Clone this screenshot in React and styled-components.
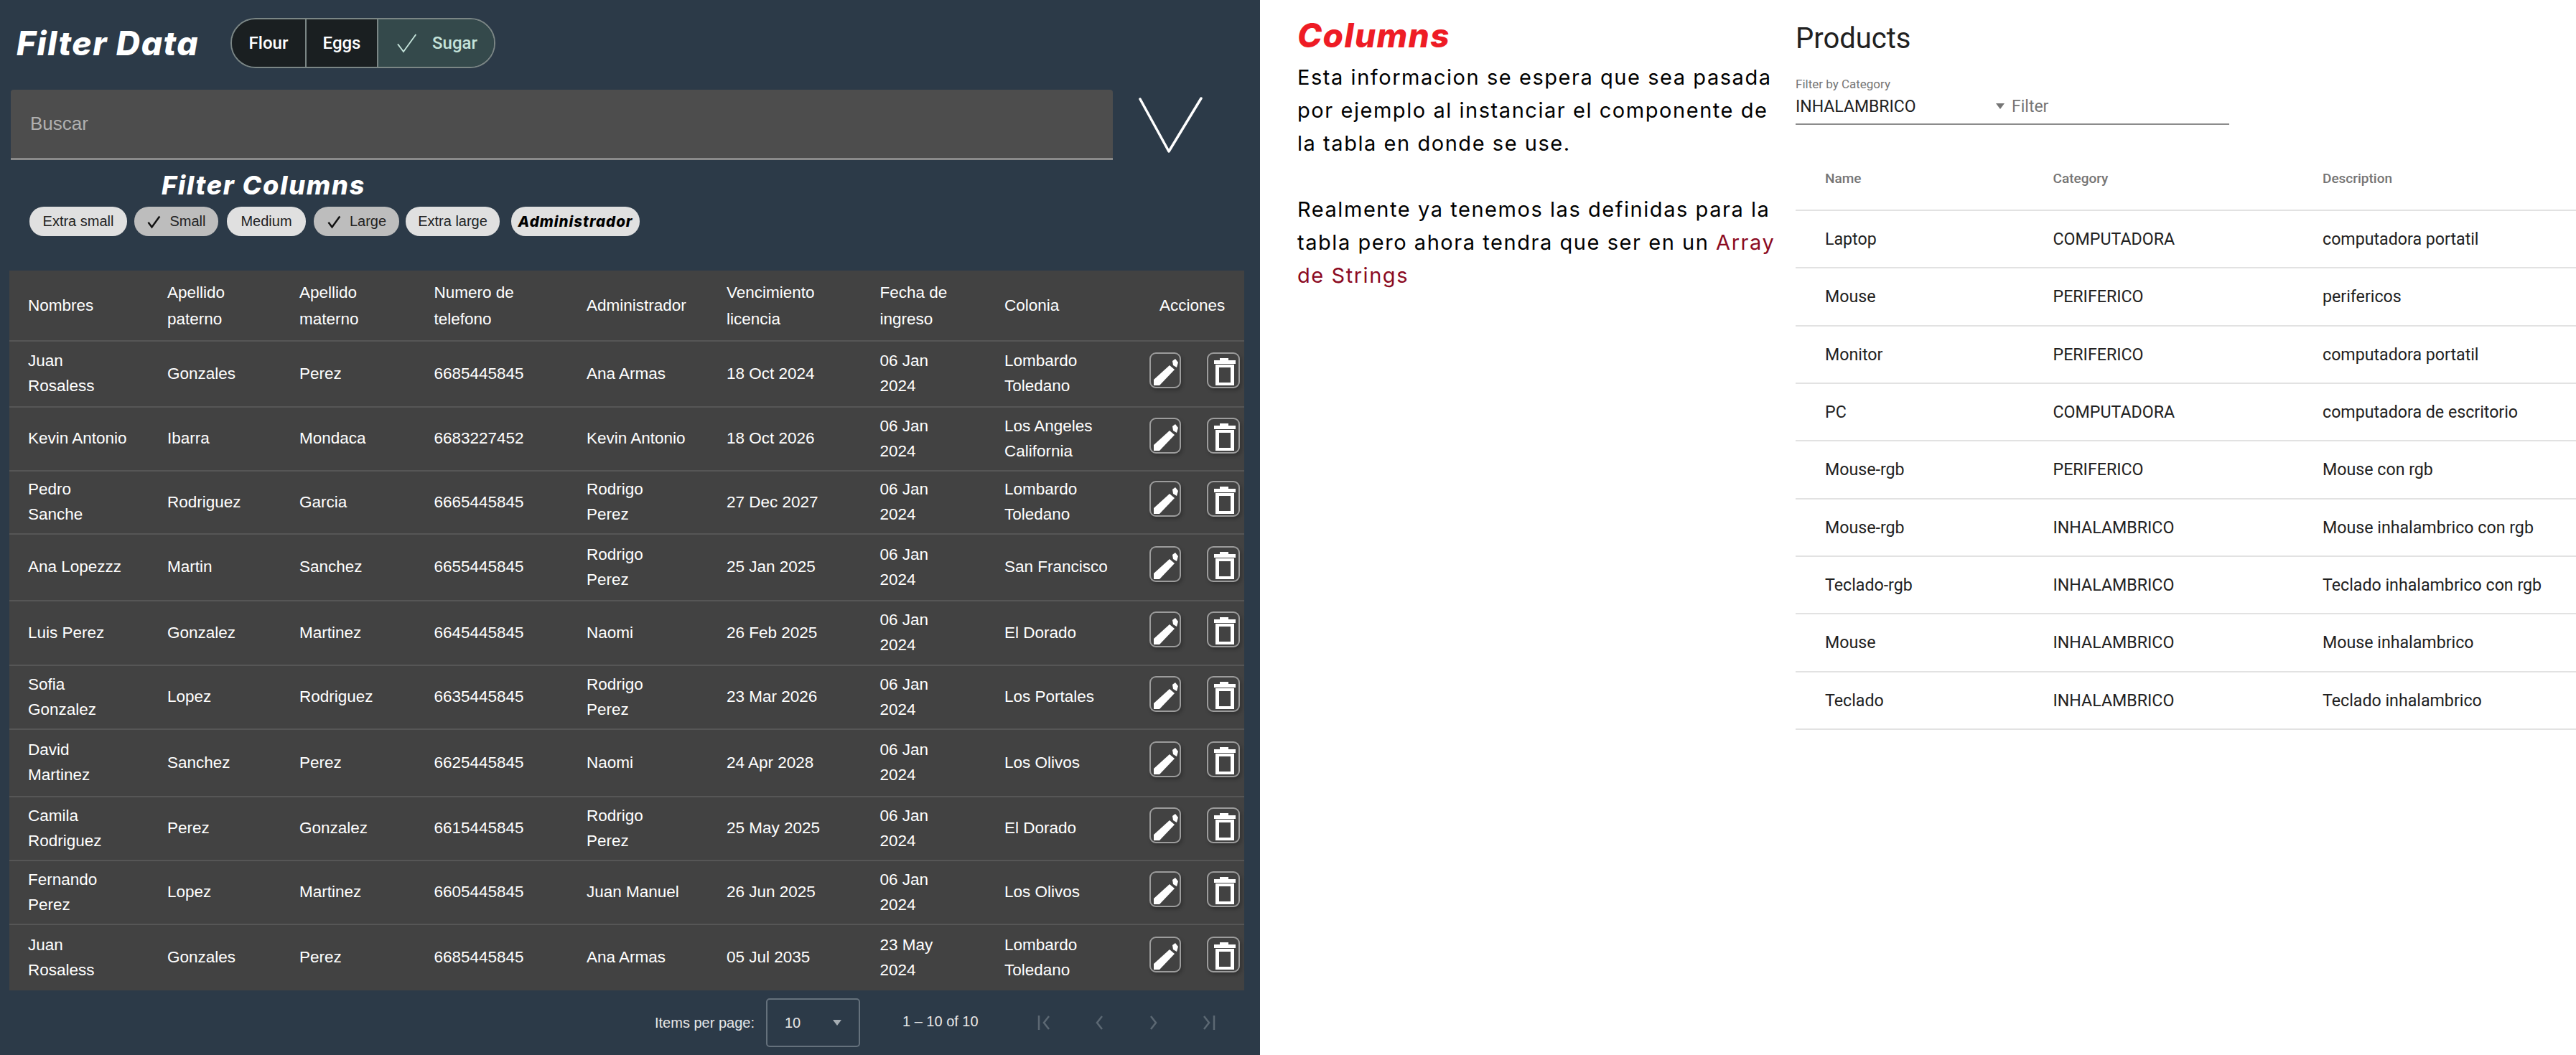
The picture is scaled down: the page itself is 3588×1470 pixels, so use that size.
import React from 'react'
import styled, { createGlobalStyle } from 'styled-components'

const GlobalStyle = createGlobalStyle`
  html, body {
    margin: 0;
    padding: 0;
    background: #fff;
  }
  * {
    box-sizing: border-box;
  }
`

const Page = styled.div`
  display: flex;
  width: 3588px;
  height: 1470px;
  overflow: hidden;
`

const LeftPanel = styled.section`
  width: 1755px;
  height: 100%;
  background: #2c3a48;
  padding-top: 25px;
  font-family: "Liberation Sans", Arial, sans-serif;
  color: #fff;
`

const TitleRow = styled.div`
  display: flex;
  align-items: center;
  height: 70px;
  padding-left: 23px;
  gap: 44px;
`

const Title = styled.h1`
  width: 254px;
  margin: 0;
  font-family: Inter, sans-serif;
  font-size: 46px;
  font-weight: 800;
  font-style: italic;
  letter-spacing: 1.6px;
  line-height: 1;
  white-space: nowrap;
  color: #fff;
`

const Toggle = styled.div`
  display: flex;
  height: 70px;
  border: 2px solid #7b8685;
  border-radius: 35px;
  overflow: hidden;
`

const ToggleItem = styled.div`
  display: flex;
  align-items: center;
  justify-content: center;
  gap: 20px;
  width: ${props => props.w}px;
  background: ${props => props.on ? '#34494b' : '#1a1f21'};
  color: ${props => props.on ? '#c4e3da' : '#fff'};
  font-family: Roboto, sans-serif;
  font-size: 24px;
  font-weight: 500;
  & + & {
    border-left: 2px solid #7b8685;
  }
`

const SearchRow = styled.div`
  display: flex;
  align-items: center;
  margin-top: 30px;
  padding-left: 15px;
  gap: 36px;
`

const SearchBox = styled.div`
  display: flex;
  align-items: center;
  width: 1535px;
  height: 98px;
  padding: 0 0 0 27px;
  background: #4d4d4d;
  border-bottom: 3px solid #8a8a8a;
  border-radius: 4px 4px 0 0;
  font-size: 26px;
  color: #b0b0b0;
`

const ColumnsTitle = styled.h2`
  margin: 13px 0 0 225px;
  font-family: Inter, sans-serif;
  font-size: 36px;
  font-weight: 800;
  font-style: italic;
  letter-spacing: 1.8px;
  line-height: 44px;
  color: #fff;
`

const ChipRow = styled.div`
  display: flex;
  height: 41px;
  margin: 8px 0 48px 41px;
`

const Chip = styled.div`
  display: flex;
  align-items: center;
  justify-content: center;
  gap: 12px;
  width: ${props => props.w}px;
  margin-right: ${props => props.gap}px;
  border-radius: 20px;
  background: ${props => props.on ? '#bdbdbd' : '#e0e0e0'};
  color: #222;
  font-size: 20px;
  white-space: nowrap;
`

const BoldChip = styled(Chip)`
  font-family: Inter, sans-serif;
  font-size: 20.5px;
  font-weight: 800;
  font-style: italic;
  letter-spacing: 1px;
  color: #000;
`

const DataTable = styled.table`
  width: 1720px;
  margin-left: 13px;
  border-collapse: collapse;
  table-layout: fixed;
  background: #424242;
  font-size: 22.5px;
  color: #fff;
`

const HeadCell = styled.th`
  padding: 0 0 0 ${props => props.pad || 26}px;
  font-weight: 400;
  line-height: 37px;
  text-align: left;
  white-space: pre-line;
`

const BodyRow = styled.tr`
  height: ${props => props.h}px;
  border-top: 2px solid #565656;
`

const HeadRow = styled.tr`
  height: 98px;
`

const BodyCell = styled.td`
  padding: 0 0 2px 26px;
  line-height: 35px;
  white-space: pre-line;
`

const ActionCell = styled.td`
  padding: 0;
`

const Actions = styled.div`
  display: flex;
  align-items: center;
  gap: 36px;
  margin: -10px 0 0 1px;
`

const ActionButton = styled.div`
  display: flex;
  align-items: center;
  justify-content: center;
  width: ${props => props.w}px;
  height: 50px;
  border: 2px solid #9c9c9c;
  border-radius: 9px;
  box-shadow: 2px 3px 5px rgba(0, 0, 0, 0.25);
`

const Pager = styled.div`
  display: flex;
  align-items: center;
  height: 90px;
  padding: 0 0 0 912px;
  color: #e8e8e8;
  font-size: 20px;
`

const PagerSelect = styled.div`
  display: flex;
  align-items: center;
  justify-content: space-between;
  width: 131px;
  height: 68px;
  margin: 0 59px 0 16px;
  padding: 0 24px;
  border: 2px solid #65717c;
  border-radius: 5px;
`

const SelectArrow = styled.span`
  width: 0;
  height: 0;
  border-left: 6px solid transparent;
  border-right: 6px solid transparent;
  border-top: 8px solid ${props => props.color};
`

const PagerRange = styled.div`
  width: 187px;
  margin-top: -4px;
`

const PagerNav = styled.div`
  display: flex;
  align-items: center;
  gap: 54px;
`

const Notes = styled.section`
  width: 746px;
  padding: 22px 0 0 52px;
  font-family: Inter, sans-serif;
  color: #000;
`

const NotesTitle = styled.h2`
  margin: 0 0 9px;
  font-size: 46px;
  font-weight: 800;
  font-style: italic;
  letter-spacing: 1.4px;
  line-height: 54px;
  color: #ee1c25;
`

const NotesText = styled.p`
  margin: 0;
  font-size: 29px;
  font-weight: 400;
  letter-spacing: 1.55px;
  line-height: 46px;
  white-space: pre-line;
`

const Accent = styled.span`
  color: #8b0a22;
`

const Products = styled.section`
  flex: 1;
  padding-top: 30px;
  font-family: Roboto, sans-serif;
  color: #212121;
`

const ProductsTitle = styled.h2`
  margin: 0;
  font-size: 40px;
  font-weight: 400;
  line-height: 48px;
`

const FilterField = styled.div`
  width: 604px;
  margin-top: 29px;
`

const FilterLabel = styled.div`
  height: 20px;
  font-size: 17px;
  line-height: 20px;
  color: #757575;
`

const FilterControl = styled.div`
  display: flex;
  align-items: center;
  height: 47px;
  padding-bottom: 3px;
  border-bottom: 2px solid #8c8c8c;
  font-size: 23px;
`

const FilterValue = styled.span`
  width: 279px;
`

const FilterHint = styled.span`
  margin-left: 10px;
  color: #757575;
`

const ProductTable = styled.div`
  margin-top: 30px;
`

const ProductRow = styled.div`
  display: grid;
  grid-template-columns: 358.5px 375.5px 1fr;
  align-items: center;
  height: ${props => props.h}px;
  border-bottom: 2px solid #e2e2e2;
  font-size: ${props => props.head ? 19 : 23.2}px;
  font-weight: ${props => props.head ? 500 : 400};
  color: ${props => props.head ? '#757575' : '#212121'};
`

const ProductCell = styled.div`
  padding-left: ${props => props.first ? 41 : 0}px;
`

const Check = ({ size, color, width }) => (
  <svg width={size} height={size} viewBox="0 0 24 24" fill="none" stroke={color} strokeWidth={width}>
    <path d="M3 13l6 8L22 3" />
  </svg>
)

const Chevron = () => (
  <svg width="89" height="78" viewBox="0 0 89 78" fill="none" stroke="#fff" strokeWidth="3.5" strokeLinecap="round" strokeLinejoin="round">
    <path d="M2 3l40 73L87 2" />
  </svg>
)

const PenIcon = () => (
  <svg width="40" height="46" viewBox="0 0 40 46" fill="#fff">
    <path d="M4 36L26 16l7 6-21 22H4z" />
    <path d="M30 10l4-3 4 5-2 7-5-3z" />
  </svg>
)

const TrashIcon = () => (
  <svg width="42" height="46" viewBox="0 0 42 46" fill="#fff">
    <path d="M16 6h12v3h10v5H8V9h8z" />
    <path fillRule="evenodd" d="M10 15h26v29H10zM15 19v21h16V19z" />
  </svg>
)

const NavIcon = ({ d }) => (
  <svg width="22" height="22" viewBox="0 0 22 22" fill="none" stroke="#5c6873" strokeWidth="2.5">
    <path d={d} />
  </svg>
)

const columns = [
  { label: 'Nombres', width: 194 },
  { label: 'Apellido\npaterno', width: 184 },
  { label: 'Apellido\nmaterno', width: 187.5 },
  { label: 'Numero de\ntelefono', width: 212.5 },
  { label: 'Administrador', width: 195 },
  { label: 'Vencimiento\nlicencia', width: 213.5 },
  { label: 'Fecha de\ningreso', width: 173.5 },
  { label: 'Colonia', width: 227 },
]

const rows = [
  [92, 'Juan\nRosaless', 'Gonzales', 'Perez', '6685445845', 'Ana Armas', '18 Oct 2024', '06 Jan\n2024', 'Lombardo\nToledano'],
  [89, 'Kevin Antonio', 'Ibarra', 'Mondaca', '6683227452', 'Kevin Antonio', '18 Oct 2026', '06 Jan\n2024', 'Los Angeles\nCalifornia'],
  [88, 'Pedro\nSanche', 'Rodriguez', 'Garcia', '6665445845', 'Rodrigo\nPerez', '27 Dec 2027', '06 Jan\n2024', 'Lombardo\nToledano'],
  [93, 'Ana Lopezzz', 'Martin', 'Sanchez', '6655445845', 'Rodrigo\nPerez', '25 Jan 2025', '06 Jan\n2024', 'San Francisco'],
  [90, 'Luis Perez', 'Gonzalez', 'Martinez', '6645445845', 'Naomi', '26 Feb 2025', '06 Jan\n2024', 'El Dorado'],
  [89, 'Sofia\nGonzalez', 'Lopez', 'Rodriguez', '6635445845', 'Rodrigo\nPerez', '23 Mar 2026', '06 Jan\n2024', 'Los Portales'],
  [94, 'David\nMartinez', 'Sanchez', 'Perez', '6625445845', 'Naomi', '24 Apr 2028', '06 Jan\n2024', 'Los Olivos'],
  [89, 'Camila\nRodriguez', 'Perez', 'Gonzalez', '6615445845', 'Rodrigo\nPerez', '25 May 2025', '06 Jan\n2024', 'El Dorado'],
  [89, 'Fernando\nPerez', 'Lopez', 'Martinez', '6605445845', 'Juan Manuel', '26 Jun 2025', '06 Jan\n2024', 'Los Olivos'],
  [92, 'Juan\nRosaless', 'Gonzales', 'Perez', '6685445845', 'Ana Armas', '05 Jul 2035', '23 May\n2024', 'Lombardo\nToledano'],
]

const products = [
  ['Laptop', 'COMPUTADORA', 'computadora portatil'],
  ['Mouse', 'PERIFERICO', 'perifericos'],
  ['Monitor', 'PERIFERICO', 'computadora portatil'],
  ['PC', 'COMPUTADORA', 'computadora de escritorio'],
  ['Mouse-rgb', 'PERIFERICO', 'Mouse con rgb'],
  ['Mouse-rgb', 'INHALAMBRICO', 'Mouse inhalambrico con rgb'],
  ['Teclado-rgb', 'INHALAMBRICO', 'Teclado inhalambrico con rgb'],
  ['Mouse', 'INHALAMBRICO', 'Mouse inhalambrico'],
  ['Teclado', 'INHALAMBRICO', 'Teclado inhalambrico'],
]

export default function App() {
  return (
    <Page>
      <GlobalStyle />
      <LeftPanel>
        <TitleRow>
          <Title>Filter Data</Title>
          <Toggle>
            <ToggleItem w={102}>Flour</ToggleItem>
            <ToggleItem w={100}>Eggs</ToggleItem>
            <ToggleItem w={163} on>
              <Check size={32} color="#c4e3da" width={1.4} />
              Sugar
            </ToggleItem>
          </Toggle>
        </TitleRow>

        <SearchRow>
          <SearchBox>Buscar</SearchBox>
          <Chevron />
        </SearchRow>

        <ColumnsTitle>Filter Columns</ColumnsTitle>
        <ChipRow>
          <Chip w={136} gap={10}>Extra small</Chip>
          <Chip w={117} gap={12} on><Check size={20} color="#111" width={3} />Small</Chip>
          <Chip w={110} gap={11}>Medium</Chip>
          <Chip w={119} gap={9} on><Check size={20} color="#111" width={3} />Large</Chip>
          <Chip w={131} gap={16}>Extra large</Chip>
          <BoldChip w={179}>Administrador</BoldChip>
        </ChipRow>

        <DataTable>
          <colgroup>
            {columns.map(c => <col key={c.label} width={c.width} />)}
            <col />
          </colgroup>
          <thead>
            <HeadRow>
              {columns.map(c => <HeadCell key={c.label}>{c.label}</HeadCell>)}
              <HeadCell pad={15}>Acciones</HeadCell>
            </HeadRow>
          </thead>
          <tbody>
            {rows.map(([h, ...cells], i) => (
              <BodyRow key={i} h={h}>
                {cells.map((text, j) => <BodyCell key={j}>{text}</BodyCell>)}
                <ActionCell>
                  <Actions>
                    <ActionButton w={44}><PenIcon /></ActionButton>
                    <ActionButton w={46}><TrashIcon /></ActionButton>
                  </Actions>
                </ActionCell>
              </BodyRow>
            ))}
          </tbody>
        </DataTable>

        <Pager>
          Items per page:
          <PagerSelect>
            10
            <SelectArrow color="#a6adb3" />
          </PagerSelect>
          <PagerRange>1 – 10 of 10</PagerRange>
          <PagerNav>
            <NavIcon d="M3 1v20M17 2l-7 9 7 9" />
            <NavIcon d="M15 2l-7 9 7 9" />
            <NavIcon d="M7 2l7 9-7 9" />
            <NavIcon d="M5 2l7 9-7 9M19 1v20" />
          </PagerNav>
        </Pager>
      </LeftPanel>

      <Notes>
        <NotesTitle>Columns</NotesTitle>
        <NotesText>
          {'Esta informacion se espera que sea pasada\npor ejemplo al instanciar el componente de\nla tabla en donde se use.\n\nRealmente ya tenemos las definidas para la\ntabla pero ahora tendra que ser en un '}
          <Accent>Array</Accent>
          {'\n'}
          <Accent>de Strings</Accent>
        </NotesText>
      </Notes>

      <Products>
        <ProductsTitle>Products</ProductsTitle>
        <FilterField>
          <FilterLabel>Filter by Category</FilterLabel>
          <FilterControl>
            <FilterValue>INHALAMBRICO</FilterValue>
            <SelectArrow color="#757575" />
            <FilterHint>Filter</FilterHint>
          </FilterControl>
        </FilterField>
        <ProductTable>
          <ProductRow head h={90}>
            <ProductCell first>Name</ProductCell>
            <ProductCell>Category</ProductCell>
            <ProductCell>Description</ProductCell>
          </ProductRow>
          {products.map((p, i) => (
            <ProductRow key={i} h={80.33}>
              <ProductCell first>{p[0]}</ProductCell>
              <ProductCell>{p[1]}</ProductCell>
              <ProductCell>{p[2]}</ProductCell>
            </ProductRow>
          ))}
        </ProductTable>
      </Products>
    </Page>
  )
}
